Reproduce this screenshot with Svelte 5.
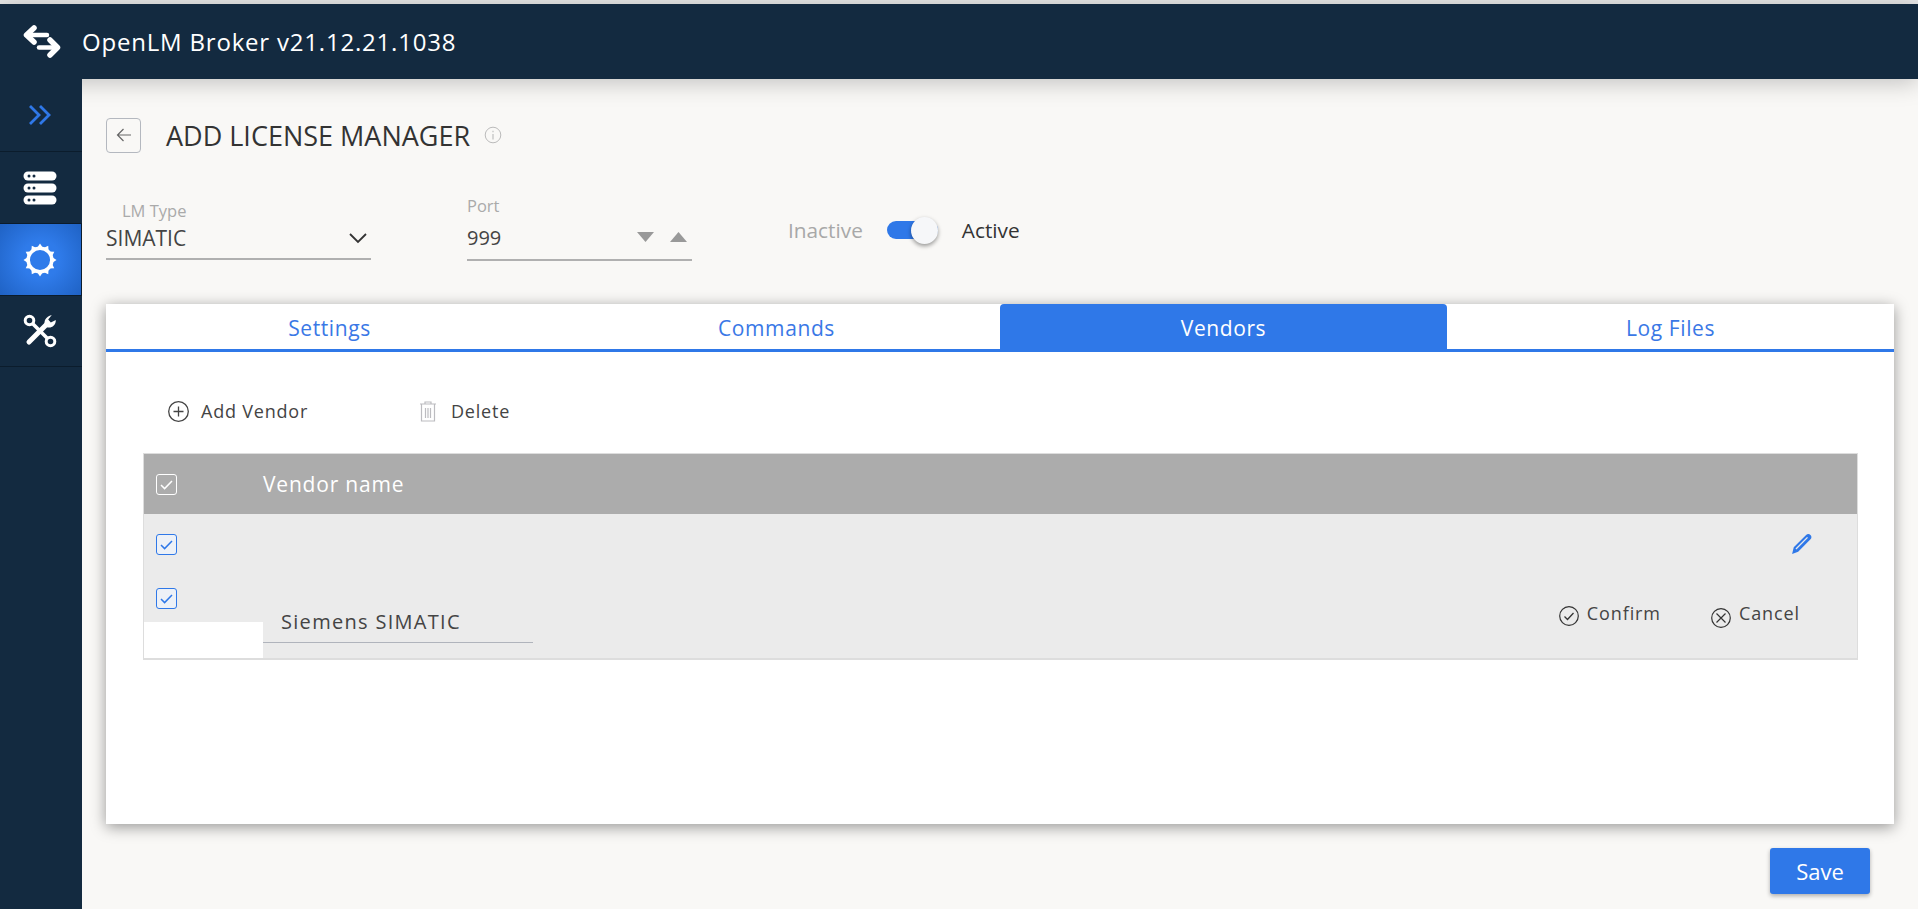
<script>
  const tabs = ['Settings', 'Commands', 'Vendors', 'Log Files'];
  let activeTab = $state('Vendors');
  const teeth = Array.from({ length: 12 }, (_, i) => i * 30);
</script>

{#snippet check(cls)}
  <span class="check {cls}">
    <svg width="15" height="13" viewBox="0 0 15 13"><path d="M2 7l3.6 3.6L13 3" fill="none" stroke="currentColor" stroke-width="1.5" /></svg>
  </span>
{/snippet}

<div class="app">
  <header class="topbar">
    <svg class="logo" width="38" height="34" viewBox="0 0 38 34">
      <path d="M11 3L3.500 10l7.500 7" fill="none" stroke="#fff" stroke-width="5.500" stroke-linejoin="round" stroke-linecap="round" />
      <path d="M5 10h19" fill="none" stroke="#fff" stroke-width="4.500" stroke-linecap="round" />
      <path d="M27 15l7.500 7.500L27 30" fill="none" stroke="#fff" stroke-width="5.500" stroke-linejoin="round" stroke-linecap="round" />
      <path d="M33 22.500H16" fill="none" stroke="#fff" stroke-width="4.500" stroke-linecap="round" />
    </svg>
    <span class="brand">OpenLM Broker v21.12.21.1038</span>
  </header>

  <div class="body">
    <nav class="sidebar">
      <div class="navitem toggler">
        <svg width="24" height="22" viewBox="0 0 24 22">
          <path d="M2 2l9 9-9 9M12 2l9 9-9 9" fill="none" stroke="#2f78e8" stroke-width="2.800" />
        </svg>
      </div>
      <div class="navitem">
        <svg width="34" height="34" viewBox="0 0 34 34">
          <rect x="0.5" y="0.5" width="33" height="9" rx="4.5" fill="#fff" />
          <rect x="0.5" y="12.5" width="33" height="9" rx="4.5" fill="#fff" />
          <rect x="0.5" y="24.5" width="33" height="9" rx="4.5" fill="#fff" />
          {#each [5, 17, 29] as y}
            <circle cx="6" cy={y} r="1.5" fill="#132a40" />
            <circle cx="11" cy={y} r="1.5" fill="#132a40" />
          {/each}
        </svg>
      </div>
      <div class="navitem active">
        <svg width="34" height="34" viewBox="0 0 34 34">
          {#each teeth as a}
            <path d="M14 5L17 .5 20 5z" fill="#fff" transform="rotate({a} 17 17)" />
          {/each}
          <circle cx="17" cy="17" r="11.800" fill="none" stroke="#fff" stroke-width="3.500" />
        </svg>
      </div>
      <div class="navitem tools">
        <svg width="34" height="34" viewBox="0 0 34 34">
          <g fill="none" stroke="#fff">
            <circle cx="6.500" cy="6.500" r="4.300" stroke-width="3" />
            <circle cx="27.500" cy="27.500" r="4.300" stroke-width="3" />
            <path d="M10 10l14.500 14.500" stroke-width="3.600" />
            <path d="M6 28L24.500 9.500" stroke-width="5" stroke-linecap="round" />
          </g>
          <path d="M22 11.500c-1.500-4 .5-9 6.800-10.500l-3.600 4.600 2.600 3 5-2.600C33 12 27.500 15 23.500 13z" fill="#fff" />
        </svg>
      </div>
    </nav>

    <main class="content">
      <div class="pagehead">
        <button class="back" aria-label="Back">
          <svg width="16" height="16" viewBox="0 0 16 16"><path d="M7.500 2L1.500 8l6 6M1.500 8H15" fill="none" stroke="#666" stroke-width="1.200" /></svg>
        </button>
        <h1>ADD LICENSE MANAGER</h1>
        <svg class="info" width="18" height="18" viewBox="0 0 18 18">
          <circle cx="9" cy="9" r="7.800" fill="none" stroke="#bbb" stroke-width="1" />
          <path d="M9 8v5.500M9 4.800v1.400" stroke="#bbb" stroke-width="1.100" />
        </svg>
      </div>

      <div class="formrow">
        <div class="field lmtype">
          <span class="label">LM Type</span>
          <div class="value">
            <span>SIMATIC</span>
            <svg width="20" height="12" viewBox="0 0 20 12"><path d="M2 2l8 8 8-8" fill="none" stroke="#333" stroke-width="1.800" /></svg>
          </div>
        </div>
        <div class="field port">
          <span class="label">Port</span>
          <div class="value">
            <span>999</span>
            <span class="spin">
              <svg width="17" height="10" viewBox="0 0 17 10"><path d="M0 0h17l-8.500 10z" fill="#999" /></svg>
              <svg width="17" height="10" viewBox="0 0 17 10"><path d="M0 10h17L8.500 0z" fill="#999" /></svg>
            </span>
          </div>
        </div>
        <div class="status">
          <span class="off">Inactive</span>
          <span class="toggle"><span class="thumb"></span></span>
          <span class="on">Active</span>
        </div>
      </div>

      <section class="card">
        <div class="tabs">
          {#each tabs as t}
            <button class="tab" class:current={t === activeTab} onclick={() => (activeTab = t)}>{t}</button>
          {/each}
        </div>

        <div class="toolbar">
          <span class="tool add">
            <svg width="21" height="21" viewBox="0 0 21 21">
              <circle cx="10.500" cy="10.500" r="9.800" fill="none" stroke="#444" stroke-width="1.300" />
              <path d="M10.500 5.500v10M5.500 10.500h10" stroke="#444" stroke-width="1.300" />
            </svg>
            Add Vendor
          </span>
          <span class="tool del">
            <svg width="18" height="21" viewBox="0 0 18 21">
              <path d="M1 3h16M6 3V1h6v2M2.500 3v17h13V3M6.500 7v10M9 7v10M11.500 7v10" fill="none" stroke="#bcbcc0" stroke-width="1.200" />
            </svg>
            Delete
          </span>
        </div>

        <div class="table">
          <div class="thead">
            <div class="cbcell">{@render check('light')}</div>
            <span>Vendor name</span>
          </div>
          <div class="row first">
            <div class="cbcell">{@render check('blue')}</div>
            <svg class="pencil" width="22" height="22" viewBox="0 0 20 20">
              <path d="M1 19l1.500-6L13.500 2c1.400-1.400 3-1.400 4.200-.2 1.200 1.200 1.200 2.800-.2 4.200L6.500 17z" fill="#2f78e8" />
              <path d="M4.500 14.500L15 4" stroke="#ebebeb" stroke-width="1.200" />
            </svg>
          </div>
          <div class="row editing">
            <div class="editleft">
              <div class="cbtop">{@render check('blue')}</div>
              <div class="blank"></div>
            </div>
            <div class="namecell">
              <span class="nameinput">Siemens SIMATIC</span>
            </div>
            <div class="actions">
              <span class="act confirm">
                <svg width="20" height="20" viewBox="0 0 20 20">
                  <circle cx="10" cy="10" r="9.300" fill="none" stroke="#333" stroke-width="1.200" />
                  <path d="M5.500 10.500l3 3 6-6.500" fill="none" stroke="#333" stroke-width="1.300" />
                </svg>
                <span>Confirm</span>
              </span>
              <span class="act cancel">
                <svg width="20" height="20" viewBox="0 0 20 20">
                  <circle cx="10" cy="10" r="9.300" fill="none" stroke="#333" stroke-width="1.200" />
                  <path d="M5.500 5.500l9 9M14.500 5.500l-9 9" stroke="#333" stroke-width="1.200" />
                </svg>
                <span>Cancel</span>
              </span>
            </div>
          </div>
        </div>
      </section>

      <div class="footer">
        <button class="save">Save</button>
      </div>
    </main>
  </div>
</div>

<style>
  :global(body) {
    margin: 0;
    overflow: hidden;
  }
  .app {
    display: flex;
    flex-direction: column;
    height: 909px;
    background: #f9f8f6;
    font-family: "Open Sans", "Noto Sans", sans-serif;
    border-top: 4px solid #e6e6e6;
    box-sizing: border-box;
  }
  .topbar {
    position: relative;
    z-index: 2;
    display: flex;
    align-items: center;
    height: 75px;
    flex: none;
    background: #132a40;
    box-shadow: 0 4px 22px rgba(0, 0, 0, 0.22);
  }
  .logo {
    margin-left: 23px;
  }
  .brand {
    margin-left: 21px;
    color: #fff;
    font-size: 24px;
    letter-spacing: 0.8px;
  }
  .body {
    display: flex;
    flex: 1;
    min-height: 0;
  }
  .sidebar {
    position: relative;
    z-index: 3;
    flex: none;
    width: 82px;
    background: #132a40;
  }
  .navitem {
    display: flex;
    align-items: center;
    justify-content: center;
    height: 71px;
    padding-right: 3px;
    border-bottom: 1px solid #0b1c2c;
  }
  .navitem.toggler {
    height: 72px;
  }
  .navitem.tools {
    height: 70px;
  }
  .navitem.active {
    background: radial-gradient(circle, #2f7bea 35%, #1f62c4 100%);
    border-right: 1px solid #0b1c2c;
    padding-right: 2px;
  }
  .content {
    flex: 1;
    min-width: 0;
    padding: 39px 24px 0;
  }
  .pagehead {
    display: flex;
    align-items: center;
    height: 34px;
  }
  .back {
    display: flex;
    align-items: center;
    justify-content: center;
    width: 35px;
    height: 35px;
    padding: 0;
    background: transparent;
    border: 1px solid #b4b8bf;
    border-radius: 4px;
  }
  h1 {
    margin: 0 0 0 25px;
    color: #333;
    font-size: 27px;
    font-weight: 400;
  }
  .info {
    margin-left: 14px;
  }
  .formrow {
    display: flex;
    align-items: flex-start;
    height: 67px;
    margin-top: 43px;
  }
  .field {
    display: flex;
    flex-direction: column;
    box-sizing: border-box;
  }
  .label {
    color: #aaa;
    font-size: 16.500px;
    line-height: 22px;
  }
  .value {
    display: flex;
    align-items: center;
    justify-content: space-between;
    color: #444;
    border-bottom: 2px solid #b0b0b0;
  }
  .lmtype {
    width: 265px;
    padding-top: 5px;
  }
  .lmtype .label {
    padding-left: 16px;
  }
  .lmtype .value {
    height: 38px;
    padding: 0 3px 5px 0;
    box-sizing: border-box;
    font-size: 21px;
  }
  .port {
    width: 225px;
    margin-left: 96px;
  }
  .port .value {
    height: 44px;
    padding-bottom: 2px;
    box-sizing: border-box;
    font-size: 20px;
  }
  .spin {
    display: flex;
    gap: 16px;
    margin-right: 5px;
  }
  .status {
    display: flex;
    align-items: center;
    margin: 21px 0 0 96px;
    font-size: 20.800px;
    height: 28px;
  }
  .off {
    color: #a8a8a8;
  }
  .on {
    color: #333;
  }
  .toggle {
    display: flex;
    align-items: center;
    justify-content: flex-end;
    width: 51px;
    height: 18px;
    margin: 0 24px;
    background: #2f78e8;
    border-radius: 9px;
  }
  .thumb {
    flex: none;
    width: 27px;
    height: 27px;
    background: #f6f7f9;
    border-radius: 50%;
    box-shadow: 0 2px 4px rgba(0, 0, 0, 0.4);
  }
  .card {
    height: 520px;
    margin-top: 42px;
    background: #fff;
    box-shadow: 0 3px 14px rgba(0, 0, 0, 0.4);
  }
  .tabs {
    display: grid;
    grid-template-columns: repeat(4, 1fr);
    border-bottom: 3px solid #2f78e8;
    height: 45px;
  }
  .tab {
    padding: 2px 0 0;
    background: transparent;
    border: 0;
    color: #3a78e6;
    font: inherit;
    font-size: 21px;
    letter-spacing: 0.6px;
  }
  .tab.current {
    background: #2f78e8;
    color: #fff;
    border-radius: 4px 4px 0 0;
  }
  .toolbar {
    display: flex;
    align-items: center;
    height: 58px;
    margin-top: 30px;
    padding-left: 62px;
    color: #444;
    font-size: 18px;
    letter-spacing: 0.8px;
  }
  .tool {
    display: flex;
    align-items: center;
    gap: 12px;
  }
  .add {
    width: 251px;
  }
  .del {
    gap: 14px;
  }
  .table {
    display: flex;
    flex-direction: column;
    height: 207px;
    margin: 13px 36px 0 37px;
    background: #ebebeb;
    border: 1px solid #ddd;
    box-sizing: border-box;
    border-bottom-width: 2px;
  }
  .thead {
    display: flex;
    align-items: center;
    height: 60px;
    flex: none;
    background: #acacac;
    color: #fff;
    font-size: 21px;
    letter-spacing: 0.8px;
  }
  .cbcell {
    width: 119px;
    flex: none;
    padding-left: 12px;
    box-sizing: border-box;
  }
  .check {
    display: flex;
    align-items: center;
    justify-content: center;
    width: 21px;
    height: 21px;
    box-sizing: border-box;
    border-radius: 3px;
  }
  .check.light {
    border: 1px solid #fff;
    color: #fff;
  }
  .check.blue {
    border: 1px solid #2f78e8;
    color: #2f78e8;
    background: #edf1f7;
  }
  .row {
    display: flex;
  }
  .row.first {
    align-items: center;
    justify-content: space-between;
    height: 60px;
    padding-right: 44px;
  }
  .pencil {
    flex: none;
  }
  .row.editing {
    flex: 1;
  }
  .editleft {
    display: flex;
    flex-direction: column;
    justify-content: space-between;
    width: 119px;
    flex: none;
  }
  .cbtop {
    padding: 14px 0 0 12px;
    margin-bottom: -8px;
  }
  .blank {
    height: 36px;
    background: #fff;
  }
  .namecell {
    display: flex;
    align-items: flex-end;
    width: 270px;
    flex: none;
  }
  .nameinput {
    display: block;
    width: 100%;
    padding: 0 0 7px 18px;
    margin-bottom: 15px;
    box-sizing: border-box;
    color: #444;
    font-size: 20px;
    letter-spacing: 1.3px;
    border-bottom: 1px solid #b0b4bc;
  }
  .actions {
    display: flex;
    flex: 1;
    justify-content: flex-end;
    padding: 27px 57px 0 0;
    color: #444;
    font-size: 18px;
    letter-spacing: 0.9px;
  }
  .act {
    display: flex;
    align-items: flex-start;
    gap: 8px;
  }
  .act svg {
    margin-top: 5px;
  }
  .confirm {
    margin-right: 50px;
  }
  .cancel svg {
    margin-top: 7px;
  }
  .act span {
    line-height: 24px;
  }
  .footer {
    display: flex;
    justify-content: flex-end;
    margin-top: 24px;
    padding-right: 24px;
  }
  .save {
    width: 100px;
    height: 46px;
    background: #2f78e8;
    border: 0;
    border-radius: 3px;
    color: #fff;
    font: inherit;
    font-size: 22px;
    box-shadow: 0 2px 4px rgba(0, 0, 0, 0.3);
  }
</style>
